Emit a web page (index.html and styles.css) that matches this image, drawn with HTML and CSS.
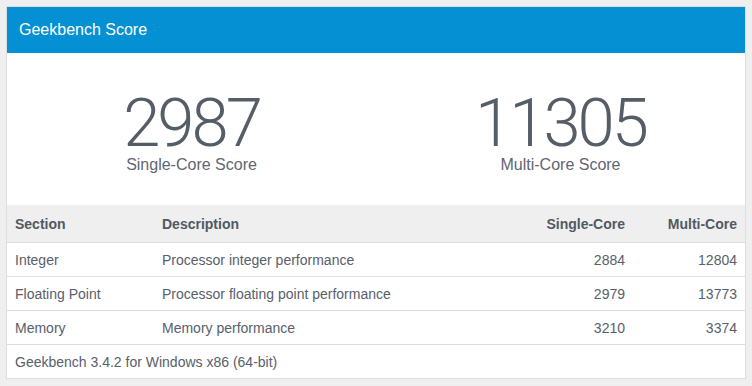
FILE: index.html
```html
<!DOCTYPE html>
<html>
<head>
<meta charset="utf-8">
<link rel="stylesheet" href="styles.css">
</head>
<body>
<div class="card">
  <div class="card-header">Geekbench Score</div>
  <div class="scores">
    <div class="score">
      <div class="score-value">2987</div>
      <div class="score-label">Single-Core Score</div>
    </div>
    <div class="score">
      <div class="score-value">11305</div>
      <div class="score-label">Multi-Core Score</div>
    </div>
  </div>
  <table class="results">
    <colgroup>
      <col class="c-section">
      <col class="c-desc">
      <col class="c-single">
      <col class="c-multi">
    </colgroup>
    <thead>
      <tr>
        <th>Section</th>
        <th>Description</th>
        <th class="num">Single-Core</th>
        <th class="num">Multi-Core</th>
      </tr>
    </thead>
    <tbody>
      <tr>
        <td>Integer</td>
        <td>Processor integer performance</td>
        <td class="num">2884</td>
        <td class="num">12804</td>
      </tr>
      <tr>
        <td>Floating Point</td>
        <td>Processor floating point performance</td>
        <td class="num">2979</td>
        <td class="num">13773</td>
      </tr>
      <tr>
        <td>Memory</td>
        <td>Memory performance</td>
        <td class="num">3210</td>
        <td class="num">3374</td>
      </tr>
      <tr>
        <td colspan="4">Geekbench 3.4.2 for Windows x86 (64-bit)</td>
      </tr>
    </tbody>
  </table>
</div>
</body>
</html>
```

FILE: styles.css
```css
html, body {
  margin: 0;
  padding: 0;
}
body {
  background: #efefef;
  padding: 6px 6px;
  font-family: "Liberation Sans", Arial, sans-serif;
  color: #58606b;
}
.card {
  width: 740px;
  box-sizing: border-box;
  background: #fff;
  border: 1px solid #dedede;
}
.card-header {
  background: #0490d2;
  color: #fff;
  font-size: 16px;
  height: 46px;
  line-height: 45px;
  padding-left: 12px;
}
.scores {
  display: flex;
  height: 152px;
}
.score {
  flex: 1;
  text-align: center;
}
.score-value {
  font-family: Roboto, "Liberation Sans", sans-serif;
  font-weight: 300;
  font-size: 67px;
  letter-spacing: -3px;
  line-height: 60px;
  color: #555d67;
  margin-top: 40px;
}
.score-label {
  font-size: 16px;
  line-height: 18px;
  color: #5f6670;
  margin-top: 3px;
}
.results {
  width: 100%;
  border-collapse: collapse;
  table-layout: fixed;
  font-size: 14px;
}
.c-section { width: 147px; }
.c-single { width: 120px; }
.c-multi { width: 112px; }
.results th {
  background: #efefef;
  font-weight: bold;
  text-align: left;
  height: 37px;
  padding: 0 8px;
  color: #515963;
}
.results td {
  height: 33px;
  padding: 0 8px;
  border-top: 1px solid #dddddd;
  color: #58606b;
}
.results .num {
  text-align: right;
}
```
